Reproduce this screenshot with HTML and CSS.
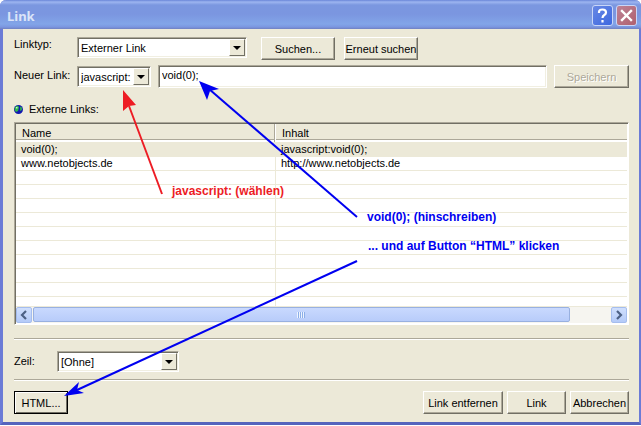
FILE: index.html
```html
<!DOCTYPE html>
<html lang="de">
<head>
  <meta charset="UTF-8">
  <meta name="viewport" content="width=device-width, initial-scale=1.0">
  <title>Link</title>
  <link rel="stylesheet" href="styles.css">
</head>
<body>
  <div class="dialog">
    <div class="titlebar">
      <h1>Link</h1>
      <button class="caption help" aria-label="Hilfe">
        <svg width="19" height="19" viewBox="0 0 19 19"><path d="M6 7V6q0-2.500 3.500-2.500T13 6.500q0 1.500-1.700 2.500T9.500 12M9.500 14v2.500" fill="none" stroke="#fff" stroke-width="2.200"/></svg>
      </button>
      <button class="caption close" aria-label="Schließen">
        <svg width="19" height="19" viewBox="0 0 19 19"><path d="M5 5l9 9M14 5l-9 9" fill="none" stroke="#fff" stroke-width="2.400" stroke-linecap="square"/></svg>
      </button>
    </div>

    <div class="content">
      <div class="row">
        <label class="label" for="linktyp">Linktyp:</label>
        <div class="combo combo-type">
          <select id="linktyp"><option>Externer Link</option></select>
          <span class="arrow"></span>
        </div>
        <button class="btn btn-search">Suchen...</button>
        <button class="btn btn-again">Erneut suchen</button>
      </div>

      <div class="row">
        <label class="label" for="protokoll">Neuer Link:</label>
        <div class="combo combo-protocol">
          <select id="protokoll"><option>javascript:</option></select>
          <span class="arrow"></span>
        </div>
        <input class="field" type="text" value="void(0);" aria-label="Adresse">
        <button class="btn btn-save" disabled>Speichern</button>
      </div>

      <div class="heading">
        <svg width="9" height="9" viewBox="0 0 9 9">
          <circle cx="4.500" cy="4.500" r="4.500" fill="#1018b0"/>
          <path d="M1 2l3-1.500 1 2-1 3.500-2 1-1.500-2z" fill="#2fb84a"/>
          <path d="M6 1.500l2 1v2.500l-2 1z" fill="#2a9f5a"/>
          <path d="M2 2h1.500v1.500H2z" fill="#c8f0c8"/>
        </svg>
        <h2>Externe Links:</h2>
      </div>

      <div class="list">
        <table>
          <thead>
            <tr><th class="name">Name</th><th>Inhalt</th></tr>
          </thead>
          <tbody>
            <tr class="selected"><td>void(0);</td><td>javascript:void(0);</td></tr>
            <tr><td>www.netobjects.de</td><td>http://www.netobjects.de</td></tr>
            <tr><td></td><td></td></tr>
            <tr><td></td><td></td></tr>
            <tr><td></td><td></td></tr>
            <tr><td></td><td></td></tr>
            <tr><td></td><td></td></tr>
            <tr><td></td><td></td></tr>
            <tr><td></td><td></td></tr>
            <tr><td></td><td></td></tr>
            <tr><td></td><td></td></tr>
            <tr class="last"><td></td><td></td></tr>
          </tbody>
        </table>
        <div class="scrollbar">
          <button class="scroll-btn" aria-label="Nach links">
            <svg width="8" height="10" viewBox="0 0 8 10"><path d="M6 1L2 5l4 4" fill="none" stroke="#4d6185" stroke-width="2.200"/></svg>
          </button>
          <div class="track"><div class="thumb"><span class="grip"></span></div></div>
          <button class="scroll-btn" aria-label="Nach rechts">
            <svg width="8" height="10" viewBox="0 0 8 10"><path d="M2 1l4 4-4 4" fill="none" stroke="#4d6185" stroke-width="2.200"/></svg>
          </button>
        </div>
      </div>

      <hr>
      <div class="row row-target">
        <label class="label" for="zeil">Zeil:</label>
        <div class="combo combo-target">
          <select id="zeil"><option>[Ohne]</option></select>
          <span class="arrow"></span>
        </div>
      </div>
      <hr>

      <div class="actions">
        <button class="btn btn-html">HTML...</button>
        <button class="btn btn-remove">Link entfernen</button>
        <button class="btn btn-link">Link</button>
        <button class="btn btn-cancel">Abbrechen</button>
      </div>
    </div>

    <!-- notes drawn over the dialog -->
    <svg class="notes" width="641" height="425" viewBox="0 0 641 425">
      <g class="red">
        <path class="line" d="M129 106L162 194"/>
        <path d="M123 90L136 105L129 106L123 111Z"/>
        <text x="172" y="195">javascript: (wählen)</text>
      </g>
      <g class="blue">
        <path class="line" d="M209 89L357 217"/>
        <path d="M199 81L219 89L210 91L207 100Z"/>
        <text x="367" y="221">void(0); (hinschreiben)</text>
        <text x="368" y="250">... und auf Button “HTML” klicken</text>
        <path class="line" d="M77 390L357 261"/>
        <path d="M64 396L79 382L77 390L84 393Z"/>
      </g>
    </svg>
  </div>
</body>
</html>
```

FILE: styles.css
```css
* {
  box-sizing: border-box;
}

body {
  margin: 0;
  background: #fff;
  font-family: "Liberation Sans", Arial, sans-serif;
  font-size: 11px;
  line-height: 14px;
  color: #000;
}

button,
input,
select {
  font: inherit;
  color: inherit;
  margin: 0;
}

.dialog {
  position: relative;
  background: #ece9d8;
  border: 3px solid #6b7bd6;
  border-right-width: 2px;
  border-top: 0;
  border-bottom-color: #5564bd;
  border-radius: 6px 6px 0 0;
}

.titlebar {
  display: flex;
  align-items: center;
  gap: 3px;
  height: 29px;
  margin: 0 -2px 0 -3px;
  padding: 2px 4px 0 7px;
  border-radius: 6px 6px 0 0;
  background: linear-gradient(#6a86d8 0, #9db5f0 2px, #7b97e0 5px, #7b96e0 14px, #82a5e8 24px, #7b96e0 27px, #7080c0 29px);
}

.titlebar h1 {
  flex: 1;
  margin: 0;
  font-family: "Noto Sans", sans-serif;
  font-size: 13px;
  color: #dbe4f8;
}

.caption {
  display: flex;
  width: 21px;
  height: 21px;
  padding: 0;
  border: 1px solid #c9d6f8;
  border-radius: 3px;
}

.help {
  background: linear-gradient(135deg, #6888e4, #3d68e0);
}

.close {
  background: linear-gradient(135deg, #bd8296, #b0606e);
}

.content {
  padding: 8px 10px 8px 11px;
}

.row {
  display: flex;
  align-items: flex-start;
  margin-bottom: 5px;
}

.label {
  width: 63px;
}

.row + .row .label {
  padding-top: 3px;
}

.row + .row .combo {
  margin-top: 1px;
}

/* sunken controls */
.combo,
.field,
.list {
  border: 1px solid;
  border-color: #aca899 #fff #fff #aca899;
  background: #fff;
}

.combo,
.field {
  box-shadow: inset 1px 1px #716f64, inset -1px -1px #f1efe2;
}

.list {
  padding: 1px;
  background: linear-gradient(90deg, #716f64 1px, transparent 1px), linear-gradient(#716f64 1px, #fff 1px);
}

.combo {
  display: flex;
  height: 21px;
  padding: 1px;
  position: relative;
}

.combo select {
  flex: 1;
  min-width: 0;
  padding: 1px 18px 0 2px;
  border: 0;
  appearance: none;
  background: none;
}

.arrow {
  position: absolute;
  top: 1px;
  right: 1px;
  display: flex;
  align-items: center;
  justify-content: center;
  width: 16px;
  height: 17px;
  background: #ece9d8;
  border: 1px solid;
  border-color: #fff #716f64 #716f64 #fff;
  pointer-events: none;
}

.arrow::before {
  content: "";
  border: 4px solid transparent;
  border-top-color: #000;
  border-bottom: 0;
}

.combo-type {
  width: 170px;
}

.combo-protocol {
  width: 74px;
}

.combo-target {
  width: 122px;
}

.field {
  flex: 1;
  min-width: 0;
  height: 23px;
  margin: 0 7px;
  padding: 1px 3px 4px;
}

.btn {
  height: 23px;
  padding: 0;
  white-space: nowrap;
  background: #ece9d8;
  border: 1px solid;
  border-color: #fff #716f64 #716f64 #fff;
  box-shadow: inset -1px -1px #aca899;
}

.btn:disabled {
  color: #aca899;
  text-shadow: 1px 1px #fff;
}

.btn-search {
  width: 74px;
  margin-left: 14px;
}

.btn-again {
  width: 74px;
  margin-left: 9px;
}

.btn-save {
  width: 75px;
}

.heading {
  display: flex;
  align-items: center;
  gap: 6px;
  margin: 14px 0 6px;
}

.heading h2 {
  margin: 0;
  font-size: 11px;
  font-weight: normal;
}

table {
  width: 100%;
  table-layout: fixed;
  border-collapse: separate;
  border-spacing: 0;
}

th {
  height: 18px;
  padding: 0 6px 1px;
  text-align: left;
  font-weight: normal;
  background: linear-gradient(#ece9d8 15px, #aca899 15px, #aca899 16px, #fff 16px);
}

.name {
  width: 260px;
  border-right: 1px solid #fff;
  box-shadow: inset -1px 0 #aca899;
}

td {
  height: 14px;
  padding: 0 5px;
  line-height: 13px;
  border-bottom: 1px solid #ece9d8;
}

td:first-child {
  border-right: 1px solid #ece9d8;
}

.selected td {
  height: 15px;
  background: #ece9d8;
}

.last td {
  height: 10px;
}

.scrollbar {
  display: flex;
  height: 16px;
  background: #f6f5f0;
}

.scroll-btn {
  display: flex;
  align-items: center;
  justify-content: center;
  width: 16px;
  padding: 0;
  background: linear-gradient(#d0dffd, #b4caf8);
  border: 1px solid #a5bdee;
  border-radius: 2px;
}

.track {
  flex: 1;
  padding: 0 1px;
}

.thumb {
  display: flex;
  align-items: center;
  justify-content: center;
  width: 93%;
  height: 15px;
  background: linear-gradient(#c9d9fe, #b8ccfa);
  border: 1px solid #98b0e0;
  border-radius: 2px;
}

.grip {
  width: 8px;
  height: 6px;
  background: repeating-linear-gradient(90deg, #eef4fe 0, #eef4fe 1px, #8caee8 1px, #8caee8 2px);
}

hr {
  height: 2px;
  margin: 0;
  border: 0;
  border-top: 1px solid #aca899;
  border-bottom: 1px solid #fff;
}

.list + hr {
  margin-top: 13px;
}

.row-target {
  margin: 11px 0 7px;
}

.row-target .label {
  width: 43px;
  padding-top: 3px;
}

.actions {
  display: flex;
  gap: 4px;
  margin-top: 10px;
}

.btn-html {
  width: 54px;
  margin-right: auto;
  border-color: #000;
  box-shadow: inset 1px 1px #fff, inset -1px -1px #716f64;
}

.btn-remove {
  width: 80px;
}

.btn-link,
.btn-cancel {
  width: 59px;
}

.notes {
  position: absolute;
  top: 0;
  left: -3px;
  pointer-events: none;
  font-size: 12px;
  font-weight: bold;
}

.notes .line {
  stroke-width: 2;
}

.red {
  fill: #ed1c24;
}

.red .line {
  stroke: #ed1c24;
}

.blue {
  fill: #0000f0;
}

.blue .line {
  stroke: #0000f0;
}
```
